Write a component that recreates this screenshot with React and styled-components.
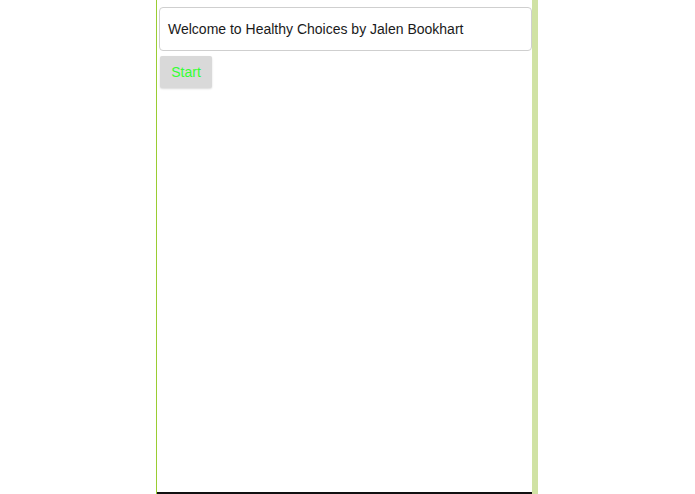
import React from "react";
import styled, { createGlobalStyle } from "styled-components";

const GlobalStyle = createGlobalStyle`
  html, body {
    margin: 0;
    padding: 0;
    background: #ffffff;
    height: 100%;
  }
  #root {
    height: 100%;
  }
`;

const App = () => {
  return (
    <>
      <GlobalStyle />
      <Page>
        <Frame>
          <Panel>
            <Greeting>Welcome to Healthy Choices by Jalen Bookhart</Greeting>
            <StartButton>Start</StartButton>
          </Panel>
        </Frame>
      </Page>
    </>
  );
};

const Page = styled.div`
  display: flex;
  justify-content: flex-start;
  height: 494px;
  padding-left: 156px;
  box-sizing: border-box;
  font-family: "Liberation Sans", Arial, sans-serif;
`;

const Frame = styled.div`
  display: flex;
  width: 382px;
  height: 100%;
  box-sizing: border-box;
  border-left: 1px solid #9acd32;
  border-right: 6px solid #d0e2a4;
`;

const Panel = styled.div`
  flex: 1;
  display: flex;
  flex-direction: column;
  align-items: flex-start;
  gap: 5px;
  padding: 7px 0 0 2px;
  border-bottom: 2px solid #111111;
  box-sizing: border-box;
`;

const Greeting = styled.div`
  align-self: stretch;
  height: 44px;
  box-sizing: border-box;
  display: flex;
  align-items: center;
  padding: 0 8px;
  border: 1px solid #cfcfcf;
  border-radius: 4px;
  font-size: 14px;
  color: #1a1a1a;
`;

const StartButton = styled.button`
  width: 52px;
  height: 32px;
  margin-left: 1px;
  border: none;
  border-radius: 2px;
  background: #d9d9d9;
  box-shadow: 0 1px 2px rgba(0, 0, 0, 0.15);
  color: #33ff33;
  font-family: "Liberation Sans", Arial, sans-serif;
  font-size: 14px;
  padding: 0;
  cursor: pointer;
`;

export default App;
